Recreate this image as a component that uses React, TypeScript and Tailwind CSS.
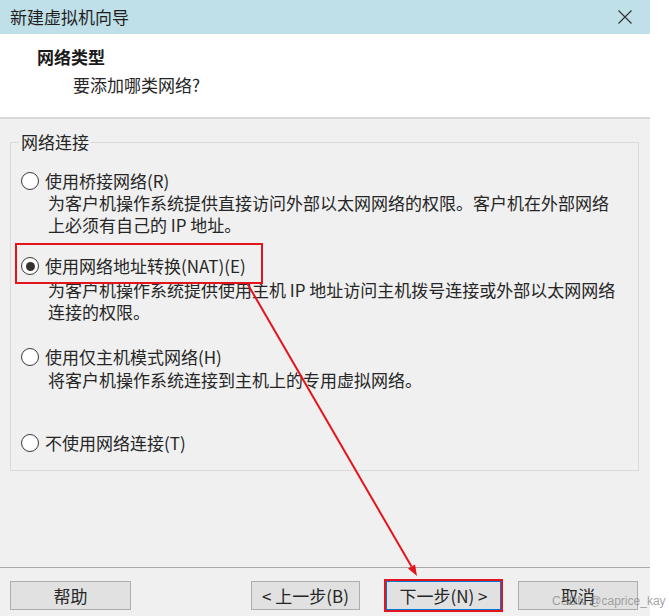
import React from 'react';

function Radio({ checked = false }: { checked?: boolean }) {
  return (
    <span className="w-[18px] h-[18px] rounded-full border border-[#3a3a3a] bg-white flex items-center justify-center shrink-0">
      {checked && <span className="w-[9px] h-[9px] rounded-full bg-[#333]" />}
    </span>
  );
}

function Option({
  label,
  checked,
  className = '',
  children,
  descClass = '',
}: {
  label: string;
  checked?: boolean;
  className?: string;
  children?: React.ReactNode;
  descClass?: string;
}) {
  return (
    <div className={className}>
      <div className="flex items-center gap-[6px] h-[22px]">
        <Radio checked={checked} />
        <span className="whitespace-nowrap">{label}</span>
      </div>
      {children && <div className={`pl-[27px] whitespace-nowrap ${descClass}`}>{children}</div>}
    </div>
  );
}

export default function App() {
  return (
    <div className="relative w-[669px] h-[616px] bg-white flex overflow-hidden text-[17px] leading-[22px] text-[#262626] font-['Noto_Sans_CJK_SC','Noto_Sans',sans-serif]">
      <div className="w-[650px] h-full flex flex-col bg-[#f0f0f0]">
        {/* title bar */}
        <div className="h-[34px] bg-[#bfe0e8] flex items-center justify-between pl-[10px] pr-[17px] shrink-0">
          <span className="text-[#1f1f1f]">新建虚拟机向导</span>
          <svg width="16" height="16" viewBox="0 0 16 16">
            <path d="M1.5 1.5 L14.5 14.5 M14.5 1.5 L1.5 14.5" stroke="#333" strokeWidth="1.2" fill="none" />
          </svg>
        </div>

        {/* header */}
        <div className="h-[83px] bg-white shrink-0 pt-[12px]">
          <div className="pl-[37px] font-bold text-[#1a1a1a]">网络类型</div>
          <div className="pl-[73px] mt-[6px]">要添加哪类网络?</div>
        </div>
        <div className="h-[2px] bg-[#d9d9d9] shrink-0" />

        {/* body */}
        <div className="flex-1 flex flex-col px-[10px] pr-[11px]">
          <fieldset className="mt-[12px] border border-[#dadada] pb-[16px]">
            <legend className="ml-[8px] px-[2px] leading-[22px]">网络连接</legend>
            <div className="pl-[10px] pt-[17px]">
              <Option label="使用桥接网络(R)">
                为客户机操作系统提供直接访问外部以太网网络的权限。客户机在外部网络
                <br />
                上必须有自己的 IP 地址。
              </Option>
              <Option label="使用网络地址转换(NAT)(E)" checked className="mt-[19px]" descClass="mt-[2px]">
                为客户机操作系统提供使用主机 IP 地址访问主机拨号连接或外部以太网网络
                <br />
                连接的权限。
              </Option>
              <Option label="使用仅主机模式网络(H)" className="mt-[23px]" descClass="mt-[1px]">
                将客户机操作系统连接到主机上的专用虚拟网络。
              </Option>
              <Option label="不使用网络连接(T)" className="mt-[41px]" />
            </div>
          </fieldset>
          <div className="flex-1" />
        </div>

        <div className="h-px bg-[#a8a8a8] shrink-0" />

        {/* buttons */}
        <div className="h-[48px] shrink-0 pt-[13px] flex items-start">
          <button className="ml-[10px] w-[121px] h-[29px] bg-[#e1e1e1] border border-[#adadad] flex items-center justify-center">
            帮助
          </button>
          <button className="ml-[120px] w-[109px] h-[29px] bg-[#e1e1e1] border border-[#adadad] flex items-center justify-center">
            &lt; 上一步(B)
          </button>
          <button className="ml-[26px] w-[115px] h-[29px] bg-[#e1e1e1] border border-[#0078d7] outline-2 outline-solid outline-[#e3141c] flex items-center justify-center">
            下一步(N) &gt;
          </button>
          <button className="ml-[17px] w-[120px] h-[29px] bg-[#e1e1e1] border border-[#adadad] flex items-center justify-center">
            取消
          </button>
        </div>
      </div>

      {/* annotation: red box around NAT option */}
      <div className="absolute left-[15px] top-[243px] w-[248px] h-[41px] border-2 border-[#e3141c] pointer-events-none" />

      {/* annotation: arrow */}
      <svg className="absolute left-0 top-0 pointer-events-none" width="669" height="616">
        <line x1="247" y1="283" x2="411.5" y2="566.5" stroke="#e3141c" strokeWidth="2" />
        <polygon points="417,576 408,568.5 415,564.5" fill="#e3141c" />
      </svg>

      {/* watermark */}
      <div className="absolute left-[552px] top-[593px] text-[12px] leading-[16px] text-[#8c8c8c]/80 font-['Liberation_Sans',sans-serif] whitespace-nowrap">
        CSDN @caprice_kay
      </div>
    </div>
  );
}
